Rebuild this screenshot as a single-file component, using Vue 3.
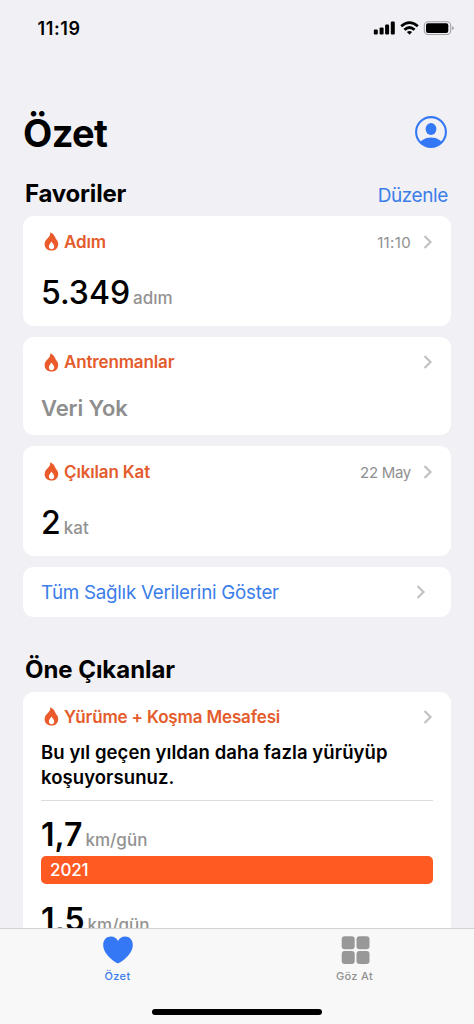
<script setup>
const favorites = [
  { title: 'Adım', date: '11:10', value: '5.349', unit: 'adım', kind: 'steps' },
  { title: 'Antrenmanlar', date: '', value: '', unit: '', kind: 'workouts' },
  { title: 'Çıkılan Kat', date: '22 May', value: '2', unit: 'kat', kind: 'floors' },
]
const flame =
  'M6.3 0.2C9.4 1.6 11 4.2 11.8 6.8C13.4 8.2 14.2 10 14.2 12.2C14.2 16 11.4 18.6 7.4 18.6C3.3 18.6 0.6 16 0.6 12.3C0.6 9.6 1.9 7.7 3.6 6.2C5.2 4.8 6.6 2.8 6.3 0.2ZM7.3 9.6C7 11.2 4.9 12.2 4.9 14.6C4.9 16.3 6 17.2 7.5 17.2C9.1 17.2 10.2 16.2 10.2 14.5C10.2 12.2 8.1 11.2 7.3 9.6Z'
</script>

<template>
  <div class="screen">
    <header class="status">
      <span class="clock">11:19</span>
      <svg class="signals" width="82" height="16" viewBox="0 0 82 16">
        <rect x="0.8" y="9.6" width="4" height="5" rx="1.1" />
        <rect x="6.6" y="7.4" width="4" height="7.2" rx="1.1" />
        <rect x="12.1" y="4.6" width="4" height="10" rx="1.1" />
        <rect x="17.8" y="1.6" width="4" height="13" rx="1.1" />
        <g fill="none" stroke="#000" stroke-width="2.7">
          <path d="M28.2 6.3Q36.5 -1 44.8 6.3" />
          <path d="M31.4 9.8Q36.5 5.2 41.6 9.8" />
        </g>
        <path d="M33.9 12Q36.5 10 39.1 12L36.5 14.7Z" />
        <rect x="51.3" y="1.7" width="26.4" height="12.8" rx="3.8" fill="none" stroke="#a3a3a6" stroke-width="1.1" />
        <rect x="53" y="3.3" width="22.3" height="9.6" rx="2" />
        <path d="M79.2 6.2Q80.9 6.8 80.9 8.1T79.2 10Z" fill="#9b9b9e" />
      </svg>
    </header>

    <div class="heading">
      <h1>Özet</h1>
      <svg class="avatar" width="32" height="32" viewBox="0 0 32 32">
        <defs><clipPath id="disc"><circle cx="16" cy="16" r="15" /></clipPath></defs>
        <circle cx="16" cy="16" r="14.9" fill="none" stroke="#3578f6" stroke-width="2.1" />
        <ellipse cx="16" cy="12.9" rx="5.4" ry="6" fill="#3578f6" />
        <ellipse cx="16" cy="30" rx="12" ry="8.4" fill="#3578f6" clip-path="url(#disc)" />
      </svg>
    </div>

    <div class="section favorites">
      <h2>Favoriler</h2>
      <a>Düzenle</a>
    </div>

    <main>
      <section v-for="f in favorites" :key="f.kind" class="card" :class="f.kind">
        <div class="top">
          <svg class="flame" width="15" height="19" viewBox="0 0 15 19"><path :d="flame" fill-rule="evenodd" /></svg>
          <span class="title">{{ f.title }}</span>
          <span class="date">{{ f.date }}</span>
          <svg class="chevron" width="10" height="16" viewBox="0 0 10 16"><path d="M1.5 2L7.5 8L1.5 14" /></svg>
        </div>
        <div v-if="f.value" class="reading">
          <span class="value">{{ f.value }}</span><span class="unit">{{ f.unit }}</span>
        </div>
        <div v-else class="empty">Veri Yok</div>
      </section>

      <section class="card all">
        <span>Tüm Sağlık Verilerini Göster</span>
        <svg class="chevron" width="10" height="16" viewBox="0 0 10 16"><path d="M1.5 2L7.5 8L1.5 14" /></svg>
      </section>

      <div class="section featured"><h2>Öne Çıkanlar</h2></div>

      <section class="card distance">
        <div class="top">
          <svg class="flame" width="15" height="19" viewBox="0 0 15 19"><path :d="flame" fill-rule="evenodd" /></svg>
          <span class="title">Yürüme + Koşma Mesafesi</span>
          <span class="date"></span>
          <svg class="chevron" width="10" height="16" viewBox="0 0 10 16"><path d="M1.5 2L7.5 8L1.5 14" /></svg>
        </div>
        <p>Bu yıl geçen yıldan daha fazla yürüyüp<br />koşuyorsunuz.</p>
        <div class="reading first"><span class="value">1,7</span><span class="unit">km/gün</span></div>
        <div class="bar">2021</div>
        <div class="reading second"><span class="value">1,5</span><span class="unit">km/gün</span></div>
      </section>
    </main>

    <nav>
      <div class="tabs">
        <div class="tab active">
          <svg width="30" height="28" viewBox="0 0 30 28"><path d="M15 27.2C13.8 27.2 0.2 19.2 0.2 8.9C0.2 4.1 3.5 0.6 7.9 0.6C11.1 0.6 13.6 2.2 15 5C16.4 2.2 18.9 0.6 22.1 0.6C26.5 0.6 29.8 4.1 29.8 8.9C29.8 19.2 16.2 27.2 15 27.2Z" fill="#3578f6" /></svg>
          <span>Özet</span>
        </div>
        <div class="tab browse">
          <svg width="30" height="28" viewBox="0 0 30 28" fill="#989898">
            <rect x="1.7" y="0.2" width="13" height="13" rx="3" /><rect x="16.5" y="0.2" width="13" height="13" rx="3" />
            <rect x="1.7" y="15" width="13" height="13" rx="3" /><rect x="16.5" y="15" width="13" height="13" rx="3" />
          </svg>
          <span>Göz At</span>
        </div>
      </div>
      <div class="home"></div>
    </nav>
  </div>
</template>

<style>
body { background: #f1f0f5; }
</style>

<style scoped>
.screen {
  height: 1024px;
  overflow: hidden;
  display: flex;
  flex-direction: column;
  background: #f1f0f5;
  color: #000;
  font-family: Inter, "Liberation Sans", sans-serif;
  white-space: nowrap;
}
h1, h2, p { margin: 0; }
svg { display: block; flex: none; }
.status {
  height: 56px;
  flex: none;
  display: flex;
  justify-content: space-between;
  padding: 0 19px 0 37.5px;
}
.clock { font-size: 18px; font-weight: 600; line-height: 57px; letter-spacing: 0.6px; }
.signals { margin-top: 20px; }
.heading {
  height: 116px;
  flex: none;
  display: flex;
  justify-content: space-between;
  padding: 0 27px 0 23px;
}
h1 { font-size: 38px; font-weight: 700; line-height: 46px; margin-top: 54px; letter-spacing: -0.6px; }
.avatar { margin-top: 60px; }
.section { display: flex; justify-content: space-between; flex: none; }
.favorites { height: 44px; padding: 0 26px 0 25px; }
h2 { font-size: 24px; font-weight: 700; line-height: 44px; letter-spacing: -0.2px; }
.favorites a { color: #3b7de9; font-size: 19px; line-height: 48px; letter-spacing: -0.4px; }
main { flex: 1; min-height: 0; overflow: hidden; padding: 0 23px; }
.card {
  background: #fff;
  border-radius: 11px;
  padding: 0 18px;
  margin-bottom: 11px;
}
.steps { height: 109.5px; }
.workouts { height: 98.5px; }
.floors { height: 109.5px; }
.top { height: 51px; display: flex; align-items: center; padding-left: 3px; }
.flame { fill: #ea5a2a; }
.title { color: #e45b2c; font-size: 17px; font-weight: 600; margin-left: 5px; letter-spacing: -0.15px; }
.date { margin-left: auto; color: #909090; font-size: 15px; margin-right: 12px; padding-top: 2px; }
.steps .date { letter-spacing: 0.35px; }
.floors .date { letter-spacing: -0.3px; }
.chevron { fill: none; stroke: #c2c2c2; stroke-width: 2.2; }
.reading { display: flex; align-items: baseline; line-height: 52px; }
.value { font-size: 32px; font-weight: 550; }
.unit { font-size: 17px; font-weight: 500; color: #929292; margin-left: 3px; }
.distance .value { font-weight: 600; }
.empty { font-size: 22px; font-weight: 600; color: #8e8e8e; line-height: 40px; letter-spacing: -0.1px; }
.all {
  height: 50px;
  display: flex;
  justify-content: space-between;
  align-items: center;
  padding-right: 25px;
  margin-bottom: 0;
  color: #3b7de9;
  font-size: 18.8px;
  letter-spacing: -0.26px;
}
.all span { padding-top: 2px; }
.featured { height: 75px; padding-left: 2px; align-items: flex-end; }
.featured h2 { line-height: 45px; letter-spacing: -0.05px; }
.distance { height: 320px; border-radius: 11px 11px 0 0; }
.distance .top { height: 50px; }
p { font-size: 18.5px; font-weight: 600; line-height: 25px; margin-top: -2px; padding-bottom: 10px; border-bottom: 1px solid #dcdcde; letter-spacing: 0.07px; }
.first { height: 55.5px; padding-top: 8px; box-sizing: border-box; }
.bar { height: 28px; border-radius: 5px; background: #ff5a22; color: #fff; font-size: 17px; font-weight: 500; line-height: 29px; padding-left: 9px; letter-spacing: -0.1px; }
.second { padding-top: 10px; }
nav { height: 95px; flex: none; background: #f8f8f8; border-top: 1px solid #d2d2d4; }
.tabs { display: flex; height: 80px; margin-left: -1px; margin-right: 1px; }
.tab { flex: 1; display: flex; flex-direction: column; align-items: center; padding-top: 7px; font-size: 11px; font-weight: 500; color: #929292; letter-spacing: 0.35px; }
.tab span { line-height: 14px; margin-top: 5px; }
.active { color: #3b7de9; }
.home { width: 170px; height: 6px; border-radius: 3px; background: #000; margin: 0 auto; }
</style>
